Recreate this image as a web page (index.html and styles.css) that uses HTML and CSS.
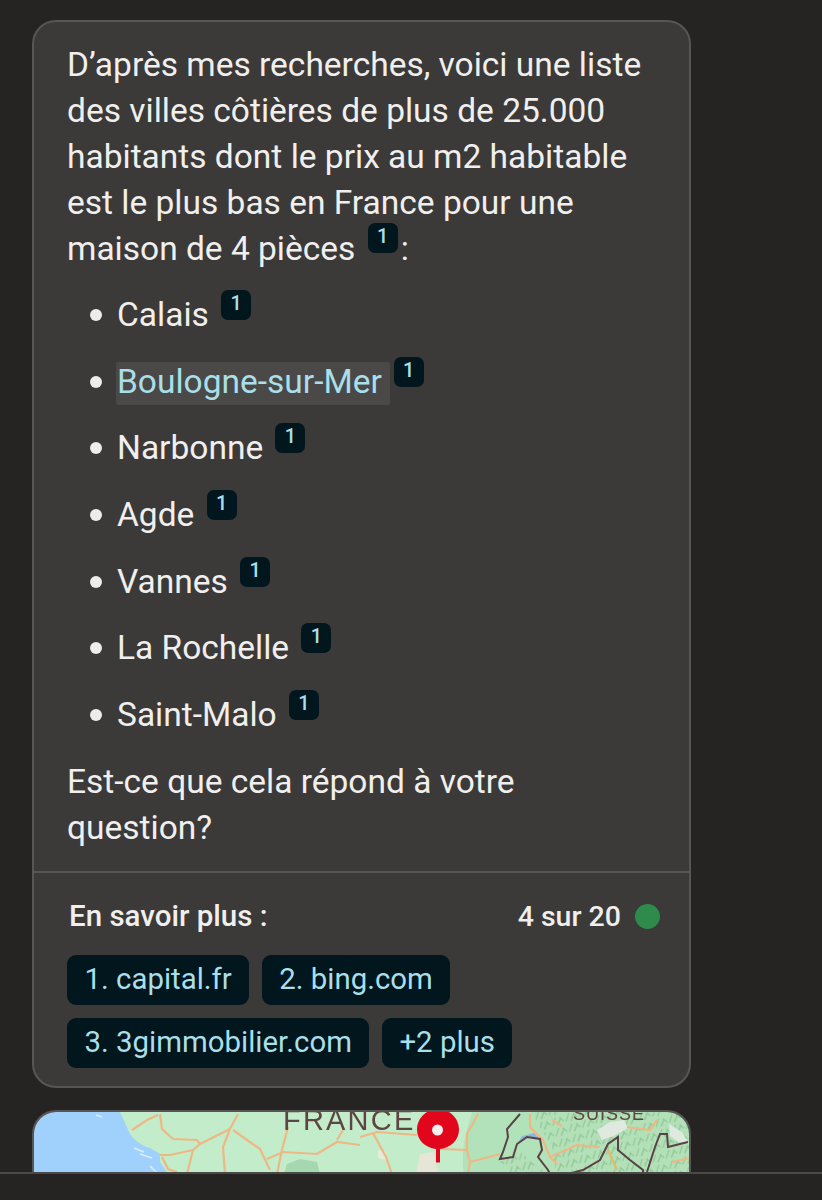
FILE: index.html
```html
<!DOCTYPE html>
<html>
<head>
	<title>Villes côtières</title>
	<link rel="stylesheet" href="styles.css">
</head>
<body>
	<main class="chat">
		<section class="card">
			<div class="answer">
				<p class="para">D’après mes recherches, voici une liste des villes côtières de plus de 25.000 habitants dont le prix au m2 habitable est le plus bas en France pour une maison de 4 pièces <a class="cite">1</a>:</p>
				<ul class="cities">
					<li>Calais <a class="cite">1</a></li>
					<li><span class="hl">Boulogne-sur-Mer</span><a class="cite">1</a></li>
					<li>Narbonne <a class="cite">1</a></li>
					<li>Agde <a class="cite">1</a></li>
					<li>Vannes <a class="cite">1</a></li>
					<li>La Rochelle <a class="cite">1</a></li>
					<li>Saint-Malo <a class="cite">1</a></li>
				</ul>
				<p class="para">Est-ce que cela répond à votre question?</p>
			</div>
			<div class="more">
				<div class="more-head">
					<span class="more-title">En savoir plus :</span>
					<span class="count">4 sur 20 <i class="dot"></i></span>
				</div>
				<div class="chips">
					<a class="chip">1. capital.fr</a>
					<a class="chip">2. bing.com</a>
					<a class="chip">3. 3gimmobilier.com</a>
					<a class="chip">+2 plus</a>
				</div>
			</div>
		</section>
		<section class="map">
			<svg class="map-art" viewBox="2 0 655 120" width="655" height="120">
				<defs>
					<pattern id="relief" width="14" height="11" patternUnits="userSpaceOnUse" patternTransform="rotate(-18)">
						<rect width="14" height="11" fill="#b4e0b8"/>
						<path d="M1 9L6 2M6 10L11 4M10 3L13 8" stroke="#8cc796" stroke-width="1.2" fill="none"/>
					</pattern>
				</defs>
				<rect x="0" y="0" width="659" height="120" fill="#c3eccb"/>
				<path d="M0 0H88L98 22C104 30 112 35 118 36L128 42V50L136 62V120H0Z" fill="#a0d0fc"/>
				<path d="M64 3L70 5M102 36L112 40M108 42L120 46M118 54L124 60" stroke="#d8eef8" stroke-width="1.5" fill="none"/>
				<path d="M440 0C434 20 428 40 432 62H659V0Z" fill="#b2e2b9"/>
				<path d="M500 0C506 14 512 22 520 34L524 62H659V0Z" fill="url(#relief)"/>
				<path d="M468 50L488 40L500 50L516 62H480Z" fill="url(#relief)"/>
				<path d="M255 52L268 47L285 50L288 62H252Z" fill="#a5d8ae"/>
				<path d="M388 42L402 40L406 62H384Z" fill="#e6e6d6"/>
				<path d="M346 38L354 40L354 48L346 46Z" fill="#e6ecd8"/>
				<path d="M565 18L578 10L592 8L596 16L582 24L570 28Z" fill="#dfe9e0"/>
				<path d="M637 12L650 20L657 32L646 30L638 24Z" fill="#dfe9e0"/>
				<g fill="none" stroke="#eeb884" stroke-width="2.2">
					<path d="M100 18L115 8L126 3"/>
					<path d="M128 2L130 17L141 27L165 28L168 32"/>
					<path d="M168 32L198 17L206 2"/>
					<path d="M198 17L191 35L193 62"/>
					<path d="M128 43L138 43L161 38L168 32"/>
					<path d="M161 38L155 62"/>
					<path d="M130 45L136 57L145 60"/>
					<path d="M201 18L215 28L228 37L238 58"/>
					<path d="M256 15L250 38L245 62"/>
					<path d="M235 47L251 40L285 42L305 30L328 33"/>
					<path d="M305 28L311 18"/>
					<path d="M328 25L345 20L385 23"/>
					<path d="M341 21L354 45L360 62"/>
					<path d="M446 2L435 22L435 38L438 50L436 62"/>
					<path d="M410 37L435 38"/>
					<path d="M438 50L468 42"/>
					<path d="M498 2L498 15L511 28L518 45L525 52"/>
					<path d="M518 45L545 33L568 35"/>
					<path d="M595 15L618 18L625 8"/>
					<path d="M520 8L530 14"/>
					<path d="M640 50L659 46"/>
				</g>
				<path d="M576 38L585 58" stroke="#e0bc6a" stroke-width="2.4" fill="none"/>
				<path d="M485 32L495 25L508 27L502 21L490 24Z" fill="#8db6de"/>
				<g fill="none" stroke="#5a4146" stroke-width="2">
					<path d="M488 2L475 17L476 25L471 40L468 47L481 45L485 32L495 25L508 27L510 38L506 45L516 58L518 62"/>
					<path d="M536 62L551 58L568 48L576 32L586 25L586 38L598 48L611 58L611 62"/>
					<path d="M615 60L623 35L628 22L635 22L636 35L656 30"/>
				</g>
				<text class="map-label france" x="251" y="18">FRANCE</text>
				<text class="map-label suisse" x="541" y="8">SUISSE</text>
				<text class="map-label region" x="326" y="76">Drôme</text>
				<text class="map-label region" x="455" y="76">38</text>
			</svg>
			<svg class="pin" viewBox="0 0 42 54" width="42" height="54">
				<path d="M21 -1C32.600 -1 42 8.200 42 19.500C42 30 34 37.500 23 39V52.500H19V39C8 37.500 0 30 0 19.500C0 8.200 9.400 -1 21 -1Z" fill="#e2061c"/>
				<circle cx="20.500" cy="20" r="5.500" fill="#f6f0ee"/>
			</svg>
		</section>
	</main>
	<footer class="bar"></footer>
</body>
</html>
```
FILE: styles.css
```css
* {
	box-sizing: border-box;
}

body {
	margin: 0;
	height: 1200px;
	overflow: hidden;
	display: flex;
	flex-direction: column;
	background-color: #252423;
	font-family: Roboto, sans-serif;
	color: #f0efee;
}

.chat {
	flex: 1;
	overflow: hidden;
	padding: 20px 131px 0 32px;
}

.card {
	height: 1068px;
	background-color: #3b3a39;
	border: 2px solid #575655;
	border-radius: 24px;
}

.answer {
	height: 849px;
	padding: 20px 33px 0;
	font-size: 33.5px;
	line-height: 46px;
}

.para {
	margin: 0;
}

.cities {
	margin: 10px 0;
	padding-left: 50px;
	list-style: none;
}

.cities li {
	height: 66.7px;
	padding-top: 10px;
}

.cities li::before {
	content: "";
	display: inline-block;
	width: 12px;
	height: 12px;
	margin: 0 15px 0 -27px;
	border-radius: 50%;
	background-color: #eeedec;
	vertical-align: 5px;
}

.hl {
	margin-left: -1px;
	padding: 0 8px 4px 1px;
	background-color: #4a4948;
	border-radius: 2px;
	color: #a8dfe9;
}

.cite {
	display: inline-block;
	width: 30px;
	height: 30px;
	margin: -8px 0 -8px 4px;
	border-radius: 7px;
	background-color: #02161e;
	color: #a8dfe9;
	font-size: 20px;
	font-weight: 500;
	line-height: 26px;
	text-align: center;
	vertical-align: 16px;
}

.para .cite {
	margin-right: 3px;
	vertical-align: 17px;
}

.hl + .cite {
	margin-left: 4px;
}

.more {
	border-top: 2px solid #575655;
	padding: 25px 29px 0 35px;
}

.more-head {
	display: flex;
	justify-content: space-between;
	align-items: center;
	height: 36px;
	font-size: 28.5px;
	font-weight: 500;
}

.more-title {
	font-size: 29.5px;
}

.count {
	display: flex;
	align-items: center;
	gap: 14px;
}

.dot {
	width: 25px;
	height: 25px;
	border-radius: 50%;
	background-color: #2e8b4c;
}

.chips {
	display: flex;
	flex-wrap: wrap;
	gap: 13px;
	margin: 21px 0 0 -2px;
}

.chip {
	height: 50px;
	padding: 0 17px 0 17.5px;
	border-radius: 9px;
	background-color: #02161e;
	color: #a8dfe9;
	font-size: 29.4px;
	line-height: 48px;
}

.map {
	position: relative;
	height: 120px;
	margin-top: 22px;
	overflow: hidden;
	border: 2px solid #575655;
	border-bottom: 0;
	border-radius: 24px 24px 0 0;
}

.map-art {
	display: block;
	filter: blur(0.5px);
}

.map-label {
	font-family: "Liberation Sans", sans-serif;
	fill: #5d4544;
}

.france {
	font-size: 29px;
	letter-spacing: 2.2px;
}

.suisse {
	font-size: 18px;
	letter-spacing: 1px;
}

.region {
	font-size: 22px;
}

.pin {
	position: absolute;
	top: -2px;
	left: 383px;
}

.bar {
	height: 28px;
	flex-shrink: 0;
	background-color: #252423;
	border-top: 2px solid #4a4948;
}
```
